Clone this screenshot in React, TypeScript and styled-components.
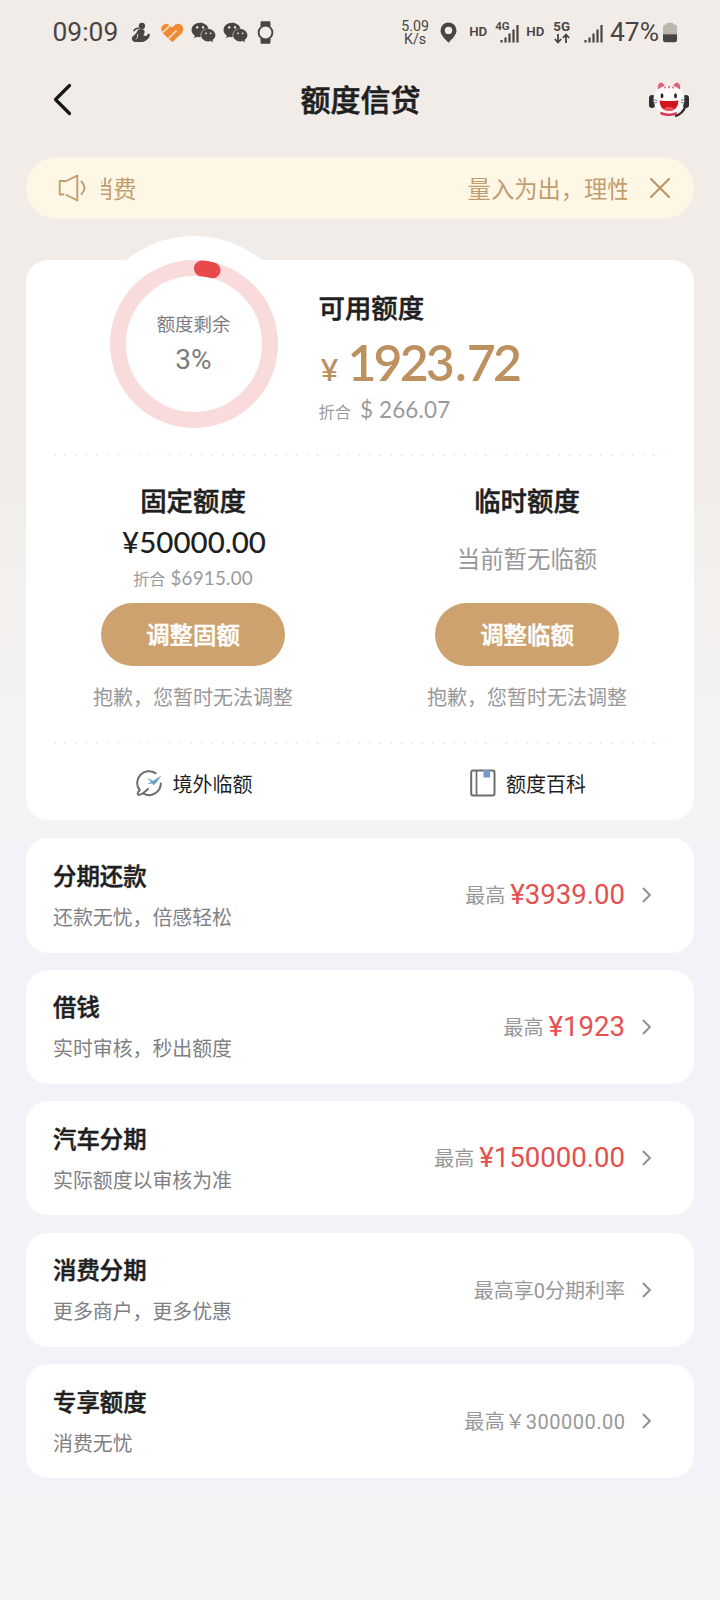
import React from "react";
import styled, { createGlobalStyle } from "styled-components";
import { FaWeixin } from "react-icons/fa";

const cjk = `"Noto Sans CJK SC", sans-serif`;
const roboto = `Roboto, "Noto Sans CJK SC", sans-serif`;
const lato = `Lato, "Noto Sans CJK SC", sans-serif`;

const GlobalStyle = createGlobalStyle`
  * { box-sizing: border-box; }
  body { margin: 0; background: #f4f4f4; font-family: ${cjk}; color: #1f1f1f; }
  svg { display: block; flex: none; }
`;

const Page = styled.div`
  width: 720px;
  min-height: 1600px;
  background: linear-gradient(#f1ece7 0, #f1ece7 440px, #f4f3f3 740px, #f4f4f4 840px);
`;

const StatusBar = styled.div`
  height: 64px;
  display: flex;
  align-items: center;
  justify-content: space-between;
  padding: 0 43px 0 52.5px;
  color: #4a4542;
  font-family: ${roboto};
`;
const StatusGroup = styled.div`
  display: flex;
  align-items: center;
`;
const StatusItem = styled.div<{ $gap: number }>`
  margin-left: ${(p) => p.$gap}px;
`;
const StatusText = styled.span`
  font-size: 26.4px;
  line-height: 30px;
`;
const Speed = styled.div`
  width: 28px;
  padding-top: 1px;
  font-size: 14.2px;
  line-height: 13px;
  text-align: center;
`;
const Tag = styled.div`
  font-size: 13.3px;
  font-weight: 600;
  line-height: 14px;
`;

const Header = styled.header`
  height: 72px;
  display: flex;
  align-items: center;
  justify-content: space-between;
  padding: 0 31px 1px 52px;
`;
const HeaderSide = styled.div<{ $end?: boolean }>`
  width: 60px;
  display: flex;
  justify-content: ${(p) => (p.$end ? "flex-end" : "flex-start")};
`;
const Title = styled.h1`
  margin: -3px 20px 0 0;
  font-size: 30px;
  font-weight: 500;
  line-height: 44px;
  -webkit-text-stroke: 0.6px currentColor;
`;

const Notice = styled.div`
  height: 62px;
  margin: 21px 26px 0;
  padding: 0 23px 0 32px;
  border-radius: 31px;
  background: #fef7e6;
  display: flex;
  align-items: center;
  color: #c29d6f;
`;
const Marquee = styled.div`
  width: 526px;
  margin: -1px 23px 0 15px;
  overflow: hidden;
  display: flex;
  gap: 331px;
  font-size: 23.3px;
  line-height: 36px;
  white-space: nowrap;
`;
const MarqueeTail = styled.span`
  margin-left: -11px;
`;

const Card = styled.section`
  height: 560px;
  margin: 41px 26px 0;
  border-radius: 22px;
  background: #fff;
`;
const Summary = styled.div`
  height: 194px;
  display: flex;
  align-items: flex-start;
`;
const Halo = styled.div`
  width: 216px;
  height: 216px;
  margin: -24px 17px 0 59.5px;
  border-radius: 50%;
  background: #fff;
  display: grid;
  place-items: center;
  & > * { grid-area: 1 / 1; }
`;
const RingLabel = styled.div`
  display: flex;
  flex-direction: column;
  align-items: center;
  color: #7c7c80;
  font-size: 18.4px;
  line-height: 28px;
`;
const RingValue = styled.div`
  margin: 1px 0 -1px;
  font-family: ${roboto};
  font-size: 28px;
  line-height: 43px;
`;
const Available = styled.div`
  padding-top: 31px;
`;
const Heading = styled.h2`
  margin: 0;
  font-size: 26.4px;
  font-weight: 500;
  line-height: 32px;
  -webkit-text-stroke: 0.5px currentColor;
`;
const BigAmount = styled.div`
  display: flex;
  align-items: baseline;
  margin-top: 9px;
  color: #bd915f;
  font-family: ${lato};
  font-size: 50px;
  font-weight: 600;
  line-height: 60px;
  letter-spacing: -2.9px;
  font-kerning: none;
`;
const Yen = styled.span`
  width: 29px;
  padding-left: 2px;
  font-size: 31px;
  letter-spacing: 0;
`;
const Point = styled.span`
  padding: 0 3px;
`;
const Convert = styled.div<{ $size: number; $top: number }>`
  display: flex;
  align-items: baseline;
  margin-top: ${(p) => p.$top}px;
  color: #9a9a9c;
  font-size: 16.2px;
  line-height: 30px;
  gap: ${(p) => (p.$size > 20 ? 9 : 5)}px;
  & > span {
    font-family: ${lato};
    font-size: ${(p) => p.$size}px;
    letter-spacing: 0.2px;
    white-space: nowrap;
  }
`;

const Dots = styled.div`
  height: 2px;
  margin: 0 26px 0 27.5px;
  background: repeating-linear-gradient(90deg, #f0f0f0 0 2px, transparent 2px 10.5px);
`;
const Columns = styled.div<{ $height: number }>`
  height: ${(p) => p.$height}px;
  display: grid;
  grid-template-columns: 1fr 1fr;
`;
const Column = styled.div`
  display: flex;
  flex-direction: column;
  align-items: center;
  padding-top: 28px;
`;
const ColumnBody = styled.div`
  height: 87px;
  display: flex;
  flex-direction: column;
  align-items: center;
`;
const FixedAmount = styled.div`
  margin: 8px 0 -1px 2px;
  font-family: ${lato};
  font-size: 29.5px;
  font-weight: 500;
  line-height: 36px;
`;
const Empty = styled.div`
  margin-top: 25px;
  color: #98989a;
  font-size: 23.4px;
  line-height: 34px;
`;
const Pill = styled.button`
  width: 184px;
  height: 63px;
  padding: 0 0 2px;
  border: 0;
  border-radius: 32px;
  background: #cda26f;
  color: #fff;
  font-family: ${cjk};
  font-size: 23.4px;
  font-weight: 500;
  -webkit-text-stroke: 0.5px currentColor;
`;
const Hint = styled.div`
  margin-top: 15.5px;
  color: #98989a;
  font-size: 20px;
  line-height: 30px;
`;
const LinkItem = styled.a`
  display: flex;
  align-items: center;
  justify-content: center;
  gap: 10px;
  padding: 2px 0 0 2px;
  font-size: 20px;
`;

const List = styled.div`
  height: 656px;
  margin-top: 20px;
  padding: 0 26px;
  display: flex;
  flex-direction: column;
  gap: 17.2px;
  background: #f2f3f8;
`;
const Row = styled.div`
  height: 114.3px;
  flex: none;
  padding: 0 43px 0 27px;
  border-radius: 22px;
  background: #fff;
  display: flex;
  align-items: center;
  &:first-child { margin-top: -1.8px; }
`;
const RowText = styled.div`
  flex: 1;
`;
const RowTitle = styled.div`
  margin-top: -1px;
  font-size: 23.4px;
  font-weight: 500;
  line-height: 42px;
  -webkit-text-stroke: 0.5px currentColor;
`;
const RowSub = styled.div`
  margin: 1px 0 -1px;
  color: #808084;
  font-size: 19.9px;
  line-height: 40px;
`;
const RowNote = styled.div<{ $wide?: boolean }>`
  display: flex;
  align-items: center;
  gap: 5px;
  margin-right: ${(p) => (p.$wide ? 16.5 : 17)}px;
  color: #98989a;
  font-family: ${roboto};
  font-size: 20px;
  line-height: 34px;
  letter-spacing: ${(p) => (p.$wide ? 0.5 : 0)}px;
`;
const RowLabel = styled.span`
  padding-top: 2px;
`;
const RowAmount = styled.span`
  color: #e5504f;
  font-size: 27.6px;
`;

const Trainer = () => (
  <svg width="19" height="21" viewBox="0 0 20 21" fill="#4a4542">
    <circle cx="11.5" cy="3.6" r="3.3" />
    <path d="M2 9C3.500 5.800 6 4.800 8.500 5.200L9 6.600C6.600 6.600 5 7.500 3.500 9.500Z" />
    <path d="M7.500 7.500Q11 6 14 8Q15 11 13 13.500Q16.500 15.500 18 11.500L20 12.500Q19 19 12 20.500H3.500Q-.5 18.500 1.500 15Q4 12.500 5.500 11Z" />
    <path d="M7 12Q8 16 5 17.500" stroke="#f1ece7" strokeWidth=".9" fill="none" />
  </svg>
);
const Heart = () => (
  <svg width="23" height="19" viewBox="0 0 23 19">
    <path
      d="M12 18.500Q11 19 10 18L2 10.500Q-.8 7 .8 3.500Q3.500-.5 7.500 1.500L11 4.500L14.500 1.500Q18.500-.5 21.300 3Q23.500 6.500 21 10Z"
      fill="#ef8a34"
    />
    <path d="M1.500 9.500L9.800 1.800M7.500 15.500L15.500 7.500" stroke="#f6e3d2" strokeWidth="1.600" fill="none" />
  </svg>
);
const Watch = () => (
  <svg width="17" height="25" viewBox="0 0 18 25">
    <path d="M4 0.500H14L14.500 6H3.500ZM3.500 19H14.500L14 24.500H4Z" fill="#4a4542" />
    <circle cx="9" cy="12.500" r="7.300" fill="#f1ece7" stroke="#4a4542" strokeWidth="2" />
  </svg>
);
const Pin = () => (
  <svg width="17" height="21" viewBox="0 0 17 21">
    <path fillRule="evenodd" fill="#4a4542" d="M8.500 0.500a8 8 0 0 1 8 8c0 4.500-4.500 8.500-8 12.200c-3.500-3.700-8-7.700-8-12.200a8 8 0 0 1 8-8zm0 4.200a3.700 3.700 0 1 0 0 7.400a3.700 3.700 0 0 0 0-7.400z" />
  </svg>
);
const Bars = () => (
  <svg width="19" height="19" viewBox="0 0 19 19" stroke="#4a4542" strokeWidth="2.200">
    <path d="M1.500 18.500V16M5.500 18.500V13.500M9.500 18.500V9.500M13.500 18.500V5.500M17.500 18.500V1" />
  </svg>
);
const FourG = styled.div`
  display: flex;
  align-items: flex-start;
  width: 24px;
  font-size: 11.5px;
  font-weight: 600;
  line-height: 10px;
  & > svg { margin: 3px 0 0 -10px; }
`;
const FiveG = styled.div`
  display: flex;
  flex-direction: column;
  align-items: center;
  padding-top: 1px;
  font-size: 13.3px;
  font-weight: 700;
  line-height: 12px;
`;
const BarsSlot = styled.div`
  padding-top: 3px;
`;
const Arrows = () => (
  <svg width="16" height="11" viewBox="0 0 16 11" fill="none" stroke="#4a4542" strokeWidth="1.800">
    <path d="M4 1V9.500M0.800 6L4 9.500L7.200 6M12 10V1.500M8.800 5L12 1.500L15.200 5" />
  </svg>
);
const Battery = () => (
  <svg width="14" height="21" viewBox="0 0 15 22">
    <path d="M4 2.500V1.500Q4 .5 5 .5H10Q11 .5 11 1.500V2.500H12.500Q15 2.500 15 5V13H0V5Q0 2.500 2.500 2.500Z" fill="#bbb5b0" />
    <path d="M0 13H15V19Q15 21.500 12.500 21.500H2.500Q0 21.500 0 19Z" fill="#4a4542" />
  </svg>
);
const Mascot = () => (
  <svg width="40" height="36" viewBox="1 1 40 36">
    <path d="M10 9Q9 2 13 1.500Q16 2 17 6ZM32 9Q33 2 29 1.500Q26 2 25 6Z" fill="#dd607c" />
    <rect x="1" y="14" width="6" height="13" rx="3" fill="#303035" />
    <rect x="35" y="14" width="6" height="13" rx="3" fill="#303035" />
    <path d="M37.500 25Q35 33 27 35" stroke="#303035" strokeWidth="2.500" fill="none" />
    <ellipse cx="20.500" cy="32.300" rx="8.500" ry="2.600" fill="#d43a50" />
    <ellipse cx="21" cy="18.500" rx="15.500" ry="14" fill="#fffafa" />
    <path d="M19.500 5L21 8L22.500 5Z" fill="#e26d80" />
    <circle cx="17" cy="6.500" r="1" fill="#e26d80" />
    <circle cx="25" cy="6.500" r="1" fill="#e26d80" />
    <ellipse cx="14" cy="14.800" rx="1.400" ry="2.500" fill="#252528" />
    <ellipse cx="27.500" cy="14.800" rx="1.400" ry="2.500" fill="#252528" />
    <path d="M11.500 19.500Q21 20.500 30.500 19.500Q30 30 21 30Q12 30 11.500 19.500Z" fill="#d3141f" />
    <path d="M15.500 28Q21 23.500 26.500 28Q24.500 30 21 30Q17.500 30 15.500 28Z" fill="#ea5558" />
    <path d="M5 18.500L9 19.500M5.500 22L9 21.500M37 18.500L33 19.500M36.500 22L33 21.500" stroke="#55555a" strokeWidth=".8" />
  </svg>
);
const Speaker = () => (
  <svg width="28" height="28" viewBox="0 0 28 28" fill="none" stroke="#c29d6f" strokeWidth="1.900" strokeLinecap="round" strokeLinejoin="round">
    <path d="M5.500 20.500H1.700V7H8.300L19.300 1.500V26.500L8.500 21" />
    <path d="M23.500 7.500Q29.500 14 23.500 20" />
  </svg>
);
const Close = () => (
  <svg width="20" height="20" viewBox="0 0 20 20" stroke="#b99363" strokeWidth="2" strokeLinecap="round">
    <path d="M1 1L19 19M19 1L1 19" />
  </svg>
);
const Ring = () => (
  <svg width="168" height="168" viewBox="-84 -84 168 168" fill="none" strokeWidth="16">
    <circle r="76" stroke="#f9dbdc" />
    <path d="M8 -75.580A76 76 0 0 1 18.500 -73.700" stroke="#e8494b" strokeLinecap="round" />
  </svg>
);
const Globe = () => (
  <svg width="27" height="27" viewBox="0 0 27 27" fill="none" stroke="#6c6c70" strokeWidth="2" strokeLinecap="round">
    <path d="M19.500 3.200A11.800 11.800 0 0 0 3.600 20.200M24.800 13.500A11.800 11.800 0 0 1 7.500 23.700" />
    <path d="M3.600 20.200Q.8 22.800 2.200 24.600Q4.500 26 12 19" />
    <path d="M12.500 9L17 11.200L24.500 6.500L20 12.500L17.500 15L16.500 13L12.500 13.500L15.500 12Z" fill="#6c9cc8" stroke="#6c9cc8" strokeWidth=".7" />
  </svg>
);
const Book = () => (
  <svg width="26" height="28" viewBox="0 0 26 28">
    <rect x="1.200" y="1.500" width="23.300" height="25" rx="2" fill="none" stroke="#6c6c70" strokeWidth="2" />
    <path d="M6.500 2V26" stroke="#6c6c70" strokeWidth="1.700" />
    <rect x="13.500" y="1" width="6.500" height="7.500" fill="#7399d0" />
  </svg>
);
const Chevron = () => (
  <svg width="9" height="16" viewBox="0 0 9 16" fill="none" stroke="#929295" strokeWidth="2">
    <path d="M1 1L7.800 8L1 15" />
  </svg>
);

type Offer = { title: string; sub: string; note: string; amount?: string; wide?: boolean };
const offers: Offer[] = [
  { title: "分期还款", sub: "还款无忧，倍感轻松", note: "最高", amount: "¥3939.00" },
  { title: "借钱", sub: "实时审核，秒出额度", note: "最高", amount: "¥1923" },
  { title: "汽车分期", sub: "实际额度以审核为准", note: "最高", amount: "¥150000.00" },
  { title: "消费分期", sub: "更多商户，更多优惠", note: "最高享0分期利率" },
  { title: "专享额度", sub: "消费无忧", note: "最高￥300000.00", wide: true },
];

export default function App() {
  return (
    <Page>
      <GlobalStyle />
      <StatusBar>
        <StatusGroup>
          <StatusText>09:09</StatusText>
          <StatusItem $gap={13}><Trainer /></StatusItem>
          <StatusItem $gap={11}><Heart /></StatusItem>
          <StatusItem $gap={7}><FaWeixin size={25} /></StatusItem>
          <StatusItem $gap={7}><FaWeixin size={25} /></StatusItem>
          <StatusItem $gap={9}><Watch /></StatusItem>
        </StatusGroup>
        <StatusGroup>
          <Speed>5.09 K/s</Speed>
          <StatusItem $gap={11}><Pin /></StatusItem>
          <StatusItem $gap={12}><Tag>HD</Tag></StatusItem>
          <StatusItem $gap={8}><FourG>4G<Bars /></FourG></StatusItem>
          <StatusItem $gap={7}><Tag>HD</Tag></StatusItem>
          <StatusItem $gap={9}><FiveG>5G<Arrows /></FiveG></StatusItem>
          <StatusItem $gap={14}><BarsSlot><Bars /></BarsSlot></StatusItem>
          <StatusItem $gap={7}><StatusText>47%</StatusText></StatusItem>
          <StatusItem $gap={4}><Battery /></StatusItem>
        </StatusGroup>
      </StatusBar>

      <Header>
        <HeaderSide>
          <svg width="20" height="33" viewBox="0 0 20 33" fill="none" stroke="#161616" strokeWidth="3.200" strokeLinecap="round" strokeLinejoin="round">
            <path d="M17.500 2.500L3.500 16.500L17.500 30.500" />
          </svg>
        </HeaderSide>
        <Title>额度信贷</Title>
        <HeaderSide $end><Mascot /></HeaderSide>
      </Header>

      <Notice>
        <Speaker />
        <Marquee>
          <MarqueeTail>消费</MarqueeTail>
          <span>量入为出，理性</span>
        </Marquee>
        <Close />
      </Notice>

      <Card>
        <Summary>
          <Halo>
            <Ring />
            <RingLabel>
              额度剩余
              <RingValue>3%</RingValue>
            </RingLabel>
          </Halo>
          <Available>
            <Heading>可用额度</Heading>
            <BigAmount>
              <Yen>¥</Yen>
              <span>1923<Point>.</Point>72</span>
            </BigAmount>
            <Convert $size={22.4} $top={-4}>折合<span>$ 266.07</span></Convert>
          </Available>
        </Summary>
        <Dots />
        <Columns $height={286}>
          <Column>
            <Heading>固定额度</Heading>
            <ColumnBody>
              <FixedAmount>¥50000.00</FixedAmount>
              <Convert $size={18.8} $top={3.5}>折合<span>$6915.00</span></Convert>
            </ColumnBody>
            <Pill>调整固额</Pill>
            <Hint>抱歉，您暂时无法调整</Hint>
          </Column>
          <Column>
            <Heading>临时额度</Heading>
            <ColumnBody>
              <Empty>当前暂无临额</Empty>
            </ColumnBody>
            <Pill>调整临额</Pill>
            <Hint>抱歉，您暂时无法调整</Hint>
          </Column>
        </Columns>
        <Dots />
        <Columns $height={76}>
          <LinkItem><Globe />境外临额</LinkItem>
          <LinkItem><Book />额度百科</LinkItem>
        </Columns>
      </Card>

      <List>
        {offers.map((o) => (
          <Row key={o.title}>
            <RowText>
              <RowTitle>{o.title}</RowTitle>
              <RowSub>{o.sub}</RowSub>
            </RowText>
            <RowNote $wide={o.wide}>
              <RowLabel>{o.note}</RowLabel>
              {o.amount && <RowAmount>{o.amount}</RowAmount>}
            </RowNote>
            <Chevron />
          </Row>
        ))}
      </List>
    </Page>
  );
}
